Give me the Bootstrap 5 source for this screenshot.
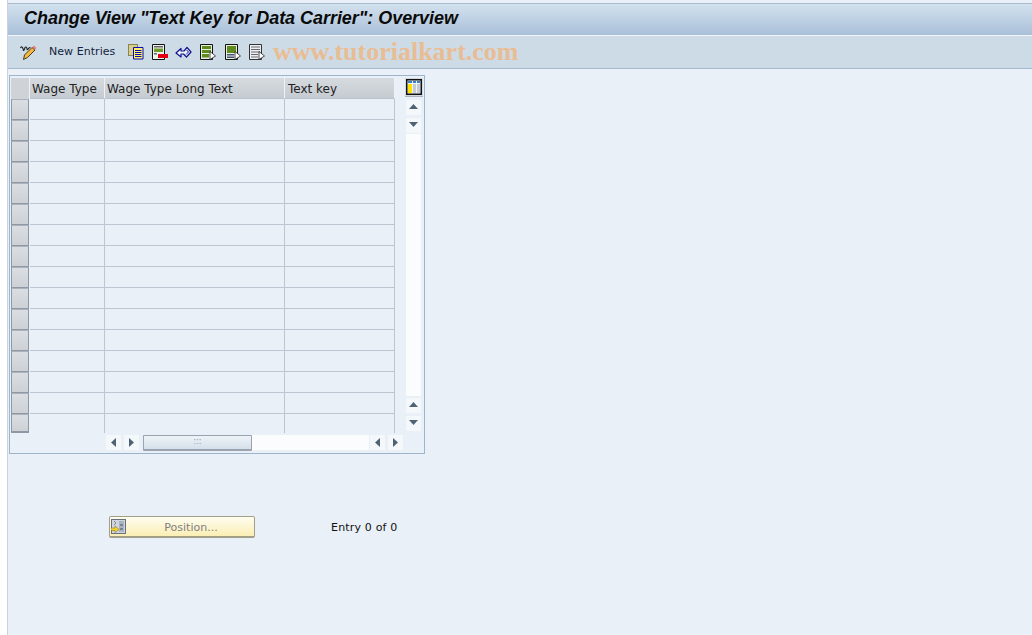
<!DOCTYPE html>
<html lang="en">
<head>
<meta charset="utf-8">
<title>Change View</title>
<link rel="stylesheet" href="https://cdn.jsdelivr.net/npm/bootstrap@5.3.0/dist/css/bootstrap.min.css">
<style>
html,body{height:100%;overflow:hidden}
body{background:#fff;font-family:"DejaVu Sans","Liberation Sans",sans-serif;font-size:11px;color:#111}
.sap-shell{height:635px;margin-left:7px;border-left:1px solid #c9d3e0;background:#e9f0f7;padding-top:3px}
.sap-title{height:33px;border-top:1px solid #a9bccf;border-bottom:1px solid #f2f6fa;background:linear-gradient(#d3e1ee,#a9c0d9);padding-left:16px;font:italic bold 18px "Liberation Sans",sans-serif;letter-spacing:-.04px;color:#0a0a0a;line-height:29px}
.sap-tools{height:33px;background:#cddbe7;border-bottom:1px solid #a5bacd;padding-left:12px;white-space:nowrap}
.sap-tools svg{display:block;flex:none}
.sap-new{width:67px;margin:0 12px 0 12px;letter-spacing:.05px;color:#14233a}
.sap-mark{font:bold 26px "Liberation Serif",serif;color:#e9bd94;margin-left:8px;line-height:30px}
.sap-gap8{margin-left:8px}
.sap-gap7{margin-left:7px}
.sap-gap9{margin-left:9px}
.sap-box{width:416px;height:379px;margin:6px 0 0 1px;border:1px solid #9db4cc;padding:2px 0 0 1px;position:relative}
.sap-grid{border-collapse:separate;border-spacing:0;table-layout:fixed;width:384px}
.sap-grid th{height:21px;padding:1px 0 0 2px;font-weight:400;font-size:12px;background:linear-gradient(#d6dbe0,#c6cbd1);border-right:1px solid #eef2f6;border-bottom:1px solid #b9c2cd;color:#222;line-height:18px}
.sap-grid th:last-child{padding-left:3px}
.sap-grid td{height:21px;padding:0;border-right:1px solid #bcc6d3;border-bottom:1px solid #bcc6d3}
.sap-grid tr:last-child td{height:19px;border-bottom:0}
.sap-grid .sap-sel{width:19px;border-right:0;border-bottom:0;background:#e9f0f7;padding:0}
.sap-grid th.sap-sel{background:#cfd3d8;border-right:1px solid #eef2f6;border-bottom:0}
.sap-selbtn{display:block;height:21px;margin-right:1px;background:linear-gradient(#dadde1,#cdd1d6);border:1px solid #8f99a6;border-top-color:#a9b2bd}
.sap-grid tr:last-child .sap-selbtn{height:19px;border-bottom-width:2px}
.sap-vbar{width:18px;margin-left:10px;height:353px}
.sap-cfg{width:18px;height:19px;background:#d3d7dc;border-bottom:1px solid #aab2bb;padding:1px 1px 0;margin-bottom:3px}
.sap-arrow{width:15px;height:15px;background:#f5f8fb;flex:none}
.sap-vbar .sap-arrow{margin-left:1px;padding-bottom:3px}
.sap-vgap{margin-bottom:3px}
.sap-track{flex:1;background:#fbfcfd;width:15px;margin:1px 0 2px 1px}
.sap-hbar{position:absolute;left:96px;top:359px;height:16px;width:297px}
.sap-hbar .sap-arrow{align-self:flex-start}
.sap-gap3{margin-left:3px}
.sap-thumb{width:109px;height:16px;margin-left:4px;background:linear-gradient(#eef3f8,#d5e0ea);border:1px solid #9aa4b0;border-bottom-width:2px;border-radius:1px;color:#8a98a6;font-size:8px;line-height:12px}
.sap-htrack{flex:1;background:#fbfcfd;height:15px;align-self:flex-start;margin-right:1px}
.sap-foot{margin:62px 0 0 101px}
.sap-pos{width:146px;height:22px;padding:2px 0 0 18px;background:linear-gradient(#fffdf0,#fbeeb4);border:1px solid #a39f86;border-bottom-width:2px;border-radius:2px;color:#7f7f7f;position:relative;line-height:18px}
.sap-pos svg{position:absolute;left:1px;top:2px}
.sap-count{margin-left:76px;padding-top:2px;letter-spacing:.18px;color:#111}
</style>
</head>
<body>
<div class="sap-shell">
  <div class="sap-title">Change View "Text Key for Data Carrier": Overview</div>
  <div class="sap-tools d-flex align-items-center">
    <svg width="17" height="17" viewBox="0 0 17 17"><path d="M.5 4C1.500 2 2.500 3 3 4.500S3 7 4 6 4.500 2.500 6 3 6.500 6 7.500 5.500 9 3 10.500 3.500" fill="none" stroke="#222" stroke-width="1.100"/><path d="M3.500 15.500 4.500 11 12 3.500l3 2.500-7.500 7.500z" fill="#f4b73c" stroke="#3a2a10" stroke-width=".9"/><path d="M12.500 3 14 1.500 16.500 4 15 6z" fill="#e8807c"/></svg>
    <span class="sap-new">New Entries</span>
    <svg width="16" height="16" viewBox="0 0 16 16"><rect x=".5" y=".5" width="9" height="11" fill="#d8cf8f" stroke="#8a8450"/><path d="M5.500 3.500h9.500v11.500H5.500z" fill="#ffef70" stroke="#0a0ab0"/><path d="M7 6.500h6.500M7 8.500h6.500M7 10.500h6.500M7 12.500h6.500" stroke="#0a0ab0"/></svg>
    <svg class="sap-gap8" width="16" height="16" viewBox="0 0 16 16"><path d="M.5.500h12v15H.500z" fill="#eef1ec" stroke="#111"/><path d="M2 2h9v1.500H2zM2 9h3v1.500H2z" fill="#666"/><path d="M2 4.500h9V8H2z" fill="#6f9a2c"/><path d="M6 10h10v4H6z" fill="#e00010"/></svg>
    <svg class="sap-gap7" width="17" height="16" viewBox="0 0 17 16"><path d="M1 9 6 4.500v2.500h3L12 3.500 16 8l-4.500 5-3-3H6v3z" fill="#eef3fa" stroke="#12128c" stroke-width="1.200" stroke-linejoin="round"/><path d="M11.500 6 13.500 8 11 10.500" fill="none" stroke="#12128c"/></svg>
    <svg class="sap-gap8" width="16" height="16" viewBox="0 0 16 16"><path d="M.5.500h12v15H.500z" fill="#e8eee0" stroke="#111"/><path d="M2 2h9v3H2zM2 6h9v3H2zM2 10h7v3.500H2z" fill="#5f8a1c"/><path d="M10 7.500l5.500 4.500-5.500 3.500z" fill="#fff" stroke="#222" stroke-width=".8"/></svg>
    <svg class="sap-gap9" width="16" height="16" viewBox="0 0 16 16"><path d="M.5.500h12v15H.500z" fill="#e8eee0" stroke="#111"/><path d="M2 2h9v7H2z" fill="#5f8a1c"/><path d="M2 10h7v1.500H2zM2 12.500h7V14H2z" fill="#457"/><path d="M10 7.500l5.500 4.500-5.500 3.500z" fill="#fff" stroke="#222" stroke-width=".8"/></svg>
    <svg class="sap-gap8" width="16" height="16" viewBox="0 0 16 16"><path d="M.5.500h12v15H.500z" fill="#eef0f0" stroke="#333"/><path d="M2 3h9M2 5.500h9M2 8h9M2 10.500h7M2 13h7" stroke="#667" stroke-width="1.200"/><path d="M10 7.500l5.500 4.500-5.500 3.500z" fill="#fff" stroke="#222" stroke-width=".8"/></svg>
    <span class="sap-mark">www.tutorialkart.com</span>
  </div>
  <div class="sap-box d-flex align-items-start">
    <table class="sap-grid">
      <colgroup><col style="width:19px"><col style="width:75px"><col style="width:180px"><col style="width:110px"></colgroup>
      <thead><tr><th class="sap-sel"></th><th>Wage Type</th><th>Wage Type Long Text</th><th>Text key</th></tr></thead>
      <tbody>
        <tr><td class="sap-sel"><span class="sap-selbtn"></span></td><td></td><td></td><td></td></tr>
        <tr><td class="sap-sel"><span class="sap-selbtn"></span></td><td></td><td></td><td></td></tr>
        <tr><td class="sap-sel"><span class="sap-selbtn"></span></td><td></td><td></td><td></td></tr>
        <tr><td class="sap-sel"><span class="sap-selbtn"></span></td><td></td><td></td><td></td></tr>
        <tr><td class="sap-sel"><span class="sap-selbtn"></span></td><td></td><td></td><td></td></tr>
        <tr><td class="sap-sel"><span class="sap-selbtn"></span></td><td></td><td></td><td></td></tr>
        <tr><td class="sap-sel"><span class="sap-selbtn"></span></td><td></td><td></td><td></td></tr>
        <tr><td class="sap-sel"><span class="sap-selbtn"></span></td><td></td><td></td><td></td></tr>
        <tr><td class="sap-sel"><span class="sap-selbtn"></span></td><td></td><td></td><td></td></tr>
        <tr><td class="sap-sel"><span class="sap-selbtn"></span></td><td></td><td></td><td></td></tr>
        <tr><td class="sap-sel"><span class="sap-selbtn"></span></td><td></td><td></td><td></td></tr>
        <tr><td class="sap-sel"><span class="sap-selbtn"></span></td><td></td><td></td><td></td></tr>
        <tr><td class="sap-sel"><span class="sap-selbtn"></span></td><td></td><td></td><td></td></tr>
        <tr><td class="sap-sel"><span class="sap-selbtn"></span></td><td></td><td></td><td></td></tr>
        <tr><td class="sap-sel"><span class="sap-selbtn"></span></td><td></td><td></td><td></td></tr>
        <tr><td class="sap-sel"><span class="sap-selbtn"></span></td><td></td><td></td><td></td></tr>
      </tbody>
    </table>
    <div class="sap-vbar d-flex flex-column">
      <div class="sap-cfg"><svg class="d-block" width="16" height="16" viewBox="0 0 16 16"><rect width="16" height="16" fill="#111"/><rect x="1.500" y="1.500" width="13" height="13" fill="#eef3f8"/><rect x="2" y="2" width="4" height="2" fill="#3d7fc0"/><rect x="7" y="2" width="3" height="2" fill="#3d7fc0"/><rect x="11" y="2" width="3" height="2" fill="#3d7fc0"/><rect x="2" y="5" width="4" height="9" fill="#ffe000"/><rect x="7" y="5" width="3" height="9" fill="#c3cbd3"/><rect x="11" y="5" width="3" height="9" fill="#c3cbd3"/></svg></div>
      <div class="sap-arrow sap-vgap d-flex align-items-center justify-content-center"><svg width="9" height="5"><path d="M0 5 4.500 0 9 5z" fill="#4f6375"/></svg></div>
      <div class="sap-arrow d-flex align-items-center justify-content-center"><svg width="9" height="5"><path d="M0 0 4.500 5 9 0z" fill="#4f6375"/></svg></div>
      <div class="sap-track"></div>
      <div class="sap-arrow sap-vgap d-flex align-items-center justify-content-center"><svg width="9" height="5"><path d="M0 5 4.500 0 9 5z" fill="#4f6375"/></svg></div>
      <div class="sap-arrow d-flex align-items-center justify-content-center"><svg width="9" height="5"><path d="M0 0 4.500 5 9 0z" fill="#4f6375"/></svg></div>
    </div>
    <div class="sap-hbar d-flex">
      <div class="sap-arrow d-flex align-items-center justify-content-center"><svg width="5" height="9"><path d="M5 0 0 4.500 5 9z" fill="#4f6375"/></svg></div>
      <div class="sap-arrow sap-gap3 d-flex align-items-center justify-content-center"><svg width="5" height="9"><path d="M0 0 5 4.500 0 9z" fill="#4f6375"/></svg></div>
      <div class="sap-thumb text-center">:::</div>
      <div class="sap-htrack"></div>
      <div class="sap-arrow d-flex align-items-center justify-content-center"><svg width="5" height="9"><path d="M5 0 0 4.500 5 9z" fill="#4f6375"/></svg></div>
      <div class="sap-arrow sap-gap3 d-flex align-items-center justify-content-center"><svg width="5" height="9"><path d="M0 0 5 4.500 0 9z" fill="#4f6375"/></svg></div>
    </div>
  </div>
  <div class="sap-foot d-flex align-items-center">
    <div class="sap-pos text-center"><svg width="15" height="15" viewBox="0 0 15 15"><rect x=".5" y=".5" width="14" height="14" fill="#cfd6e0" stroke="#66707c"/><rect x="8" y="2" width="5" height="11" fill="#aab4c2"/><path d="M9 6h3M9 10h3" stroke="#555"/><path d="M3 2l2 2-2 2" fill="none" stroke="#889"/><path d="M0 9h4V7l4 3.500-4 3v-2H0z" fill="#f6d430" stroke="#8a7a20" stroke-width=".6"/></svg>Position...</div>
    <span class="sap-count">Entry 0 of 0</span>
  </div>
</div>
</body>
</html>
